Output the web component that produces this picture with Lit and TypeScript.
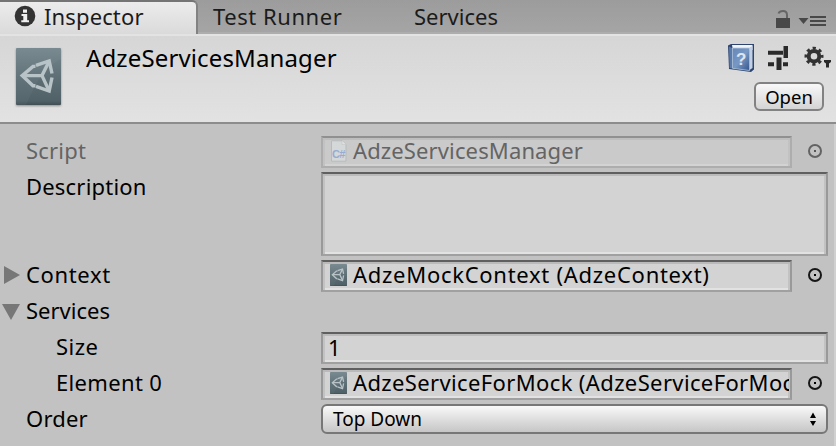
import { LitElement, html, svg, css, nothing } from "lit";
import { customElement, property } from "lit/decorators.js";
import { styleMap } from "lit/directives/style-map.js";

const unityMark = svg`
  <g fill="none" stroke="#b8c3c8" stroke-width="3.4" stroke-linejoin="miter">
    <path d="M19.5 37.8H17L6.2 27.6 17 18.4H19.5"/>
    <path d="M20 17.4 33.2 13 36 25.5M36 29.5 33.2 43 20 38.4"/>
    <path d="M6 27.6H26L33.2 13M26 27.6 33.2 43"/>
  </g>`;

@customElement("asset-icon")
export class AssetIcon extends LitElement {
  static styles = css`
    :host { display: block; }
    svg { display: block; width: 100%; height: 100%; }
  `;
  render() {
    return html`<svg viewBox="0 0 45 57" preserveAspectRatio="none">
      <defs><linearGradient id="g" x1="0" y1="0" x2="0" y2="1">
        <stop offset="0" stop-color="#75868d"/><stop offset=".55" stop-color="#5c6d74"/>
        <stop offset=".93" stop-color="#506168"/><stop offset="1" stop-color="#414f55"/>
      </linearGradient></defs>
      <rect width="45" height="57" rx="1" fill="url(#g)"/>
      <path d="M0 0H45V11Q26 19 10 57H0Z" fill="#fff" opacity=".035"/>
      ${unityMark}
    </svg>`;
  }
}

@customElement("object-field")
export class ObjectField extends LitElement {
  @property() value = "";
  @property() kind = "asset";
  @property({ type: Number }) tracking = 0.35;
  @property({ type: Boolean, reflect: true }) disabled = false;
  static styles = css`
    :host { display: flex; width: 506px; height: 32px; color: #000; }
    .box {
      box-sizing: border-box; width: 471px; height: 32px; display: flex;
      border: 2px solid #999; border-top-color: #5f5f5f; border-bottom-color: #a0a0a0;
      background: #d3d3d3; padding-left: 7px; padding-right: 1px;
      box-shadow: inset 0 2px #bababa, inset 2px 0 #c2c2c2, inset -2px 0 #c2c2c2, inset 0 -2px #e2e2e2;
    }
    :host([disabled]) .box {
      background: #cacaca; border-color: #adadad; border-top-color: #909090;
      box-shadow: inset 0 2px #bebebe, inset 2px 0 #c2c2c2, inset -2px 0 #c2c2c2, inset 0 -2px #d3d3d3;
    }
    .icon { flex: none; width: 17px; height: 22px; margin-top: 2px; }
    svg.icon { display: block; }
    .clip { flex: 1; min-width: 0; overflow-x: clip; overflow-y: visible; white-space: nowrap; padding-left: 6px; line-height: 27px; margin-top: -1px; }
    :host([disabled]) .clip { color: #646464; }
    .picker { width: 16px; height: 16px; margin: 8px 0 0 15px; }
    :host([disabled]) .picker { opacity: .55; }
  `;
  render() {
    return html`<div class="box">
        ${this.kind === "script"
          ? html`<svg class="icon" viewBox="0 0 17 22">
              <path d="M1.5 .8H12L16 4.5V21.2H1.5Z" fill="#d4d8d9" stroke="#b7bbbb"/>
              <path d="M12 .8V4.5H16" fill="#e0e0e0" stroke="#c4c6c6" stroke-width=".6"/>
              <text x="2" y="17.6" font-family="Liberation Sans" font-size="11" letter-spacing="-.6" font-weight="700" fill="#98abd0">C#</text></svg>`
          : html`<asset-icon class="icon"></asset-icon>`}
        <div class="clip" style=${styleMap({ letterSpacing: `${this.tracking}px` })}>${this.value}</div>
      </div>
      <svg class="picker" viewBox="0 0 16 16">
        <circle cx="8" cy="7" r="6" fill="none" stroke="#161616" stroke-width="2"/>
        <rect x="7" y="6" width="2" height="2" fill="#000"/>
      </svg>`;
  }
}

@customElement("property-row")
export class PropertyRow extends LitElement {
  @property() label = "";
  @property() foldout = "";
  @property({ type: Number }) tracking = 0.2;
  @property({ type: Boolean, reflect: true }) disabled = false;
  @property({ type: Boolean, reflect: true }) nested = false;
  static styles = css`
    :host { display: flex; align-items: flex-start; color: #000; }
    .label { width: 321px; height: 32px; display: flex; line-height: 32px; white-space: nowrap; }
    .gutter { flex: none; width: 26px; height: 32px; }
    .text { margin-top: -2px; }
    :host([nested]) .gutter { width: 56px; }
    :host([disabled]) .text { color: #646464; }
  `;
  render() {
    const arrow =
      this.foldout === "closed"
        ? svg`<path d="M4 6V24L20 15Z" fill="#777"/>`
        : this.foldout === "open"
          ? svg`<path d="M2 8H20L11 24Z" fill="#777"/>`
          : nothing;
    return html`<div class="label"><svg class="gutter" viewBox="0 0 26 32">${arrow}</svg>
        <span class="text" style=${styleMap({ letterSpacing: `${this.tracking}px` })}>${this.label}</span></div><slot></slot>`;
  }
}

@customElement("app-root")
export class AppRoot extends LitElement {
  static styles = css`
    :host {
      display: block; box-sizing: border-box; width: 836px; height: 446px; overflow: hidden;
      background: #c2c2c2; color: #000; font: 22px "Noto Sans", "Open Sans", sans-serif;
    }
    .tabs { display: flex; height: 34px; box-sizing: border-box; color: #1b1b1b;
      background: linear-gradient(#9c9c9c, #a4a4a4 90%); border-bottom: 2px solid #adadad; }
    .tab { display: flex; line-height: 32px; white-space: nowrap; }
    .tab.active { box-sizing: border-box; width: 198px; height: 34px; padding-left: 14px;
      border-top: 2px solid #747474; border-right: 2px solid #828282; border-radius: 0 6px 0 0;
      background: linear-gradient(#ececec, #dadada); line-height: 28px; letter-spacing: .13px; }
    .info { flex: none; width: 22px; height: 22px; margin: 3px 8px 0 0; }
    .runner { width: 201px; padding-left: 15px; letter-spacing: .55px; }
    .services { flex: 1; letter-spacing: 0; }
    .tools { flex: none; width: 66px; height: 32px; }
    header { display: flex; justify-content: space-between; height: 90px; box-sizing: border-box;
      background: linear-gradient(#d6d6d6, #e2e2e2); border-top: 2px solid #e3e3e3; border-bottom: 2px solid #8c8c8c; }
    .identity { display: flex; }
    .badge { width: 45px; height: 57px; margin: 12px 25px 0 16px; filter: drop-shadow(0 1px 1px #8d8d8d); }
    .title { margin-top: 6px; font-size: 24px; line-height: 32px; letter-spacing: .13px; }
    .actions { display: flex; flex-direction: column; align-items: flex-end; }
    .glyphs { width: 110px; height: 46px; }
    .open { box-sizing: border-box; width: 70px; height: 29px; margin-right: 12px; border: 2px solid #828282;
      border-radius: 6px; background: linear-gradient(#f8f8f8, #d4d4d4); text-align: center; line-height: 25px; font-size: 18.5px; }
    .body { display: grid; row-gap: 4px; height: 322px; box-sizing: border-box; align-content: start;
      padding-top: 12px; border-right: 2px solid #d0d0d0; }
    .input { box-sizing: border-box; width: 507px; height: 32px; padding-left: 5px; line-height: 27px;
      border: 2px solid #999; border-top-color: #5f5f5f; border-bottom-color: #a0a0a0; background: #d3d3d3;
      box-shadow: inset 0 2px #bababa, inset 2px 0 #c2c2c2, inset -2px 0 #c2c2c2, inset 0 -2px #e2e2e2; }
    .area { height: 84px; }
    .select { box-sizing: border-box; width: 507px; height: 30px; display: flex; justify-content: space-between;
      border: 2px solid #777; border-radius: 6px; background: linear-gradient(#f9f9f9, #c7c5c6); padding: 0 8px 0 10px;
      font-size: 19px; line-height: 26px; }
    .updown { width: 10px; height: 26px; }
  `;
  render() {
    return html`
      <nav class="tabs">
        <div class="tab active">
          <svg class="info" viewBox="0 0 22 22"><circle cx="11" cy="11" r="10.3" fill="#333"/>
            <path d="M9 4.5h4v3.3H9ZM7.5 9h5.7v6.2H15v2H7.3v-2h2v-4.1H7.5Z" fill="#f0f0f0"/></svg>
          <span>Inspector</span>
        </div>
        <div class="tab runner">Test Runner</div>
        <div class="tab services">Services</div>
        <svg class="tools" viewBox="0 0 66 32" fill="#484848">
          <path d="M6 18H20V28H6Z"/><path d="M8.5 13.5Q9.5 11 13 11Q17 11 17 15V18" fill="none" stroke="#666" stroke-width="2"/>
          <path d="M28.5 18H38.5L33.5 24Z"/><path d="M40 16H56V18H40ZM40 20H56V22H40ZM40 24H56V26H40Z"/>
        </svg>
      </nav>
      <header>
        <div class="identity">
          <asset-icon class="badge"></asset-icon>
          <div class="title">AdzeServicesManager</div>
        </div>
        <div class="actions">
          <svg class="glyphs" viewBox="726 36 110 46">
            <defs><linearGradient id="book" x1="0" y1="0" x2="1" y2="1"><stop offset="0" stop-color="#6688b9"/><stop offset=".5" stop-color="#7797c4"/><stop offset="1" stop-color="#34558c"/></linearGradient></defs>
            <path d="M728 45.5 731 44H754V69.5L751 72 729 69Z" fill="#2d4570"/>
            <path d="M732 45H752.5V50H733Z" fill="#f1f4f8"/>
            <path d="M749.5 47.5 752.5 46V68L749.5 70Z" fill="#c3d0e3"/>
            <path d="M729 46.5 732 48V68.5L729.5 68Z" fill="#5879aa"/>
            <path d="M732.5 48H749.5V70.5L732.5 68.3Z" fill="url(#book)" stroke="#b6c9e2" stroke-width=".8"/>
            <text x="736" y="64.5" font-family="Liberation Sans" font-size="17" font-weight="700" fill="#dbe6f5">?</text>
            <g fill="#2a2a2a"><path d="M768 50.7H783V54.7H768ZM783.5 46H788V58H783.5ZM768 62.3H774V66.3H768ZM776.5 57.5H781.5V70H776.5ZM783 62.3H788V66.3H783Z"/>
            <path d="M824 60H831V62L829 63.5V67.5H826V63.5L824 62Z"/></g>
            <circle cx="814" cy="56.2" r="5.3" fill="none" stroke="#333" stroke-width="4"/>
            <circle cx="814" cy="56.2" r="8" fill="none" stroke="#333" stroke-width="3" stroke-dasharray="3.2 3.083" stroke-dashoffset="1.6"/>
          </svg>
          <div class="open">Open</div>
        </div>
      </header>
      <main class="body">
        <property-row label="Script" disabled><object-field value="AdzeServicesManager" kind="script" tracking="0.13" disabled></object-field></property-row>
        <property-row label="Description"><div class="input area"></div></property-row>
        <property-row label="Context" foldout="closed" tracking="0.65"><object-field value="AdzeMockContext (AdzeContext)" tracking="0.72"></object-field></property-row>
        <property-row label="Services" foldout="open" tracking="0"></property-row>
        <property-row label="Size" nested tracking="0.5"><div class="input">1</div></property-row>
        <property-row label="Element 0" nested tracking="0.35"><object-field value="AdzeServiceForMock (AdzeServiceForMock)" tracking="0.37"></object-field></property-row>
        <property-row label="Order"><div class="select"><span>Top Down</span>
          <svg class="updown" viewBox="0 0 10 26"><path d="M2 12 5 6.5 8 12ZM2 15H8L5 20Z" fill="#000"/></svg></div></property-row>
      </main>`;
  }
}
